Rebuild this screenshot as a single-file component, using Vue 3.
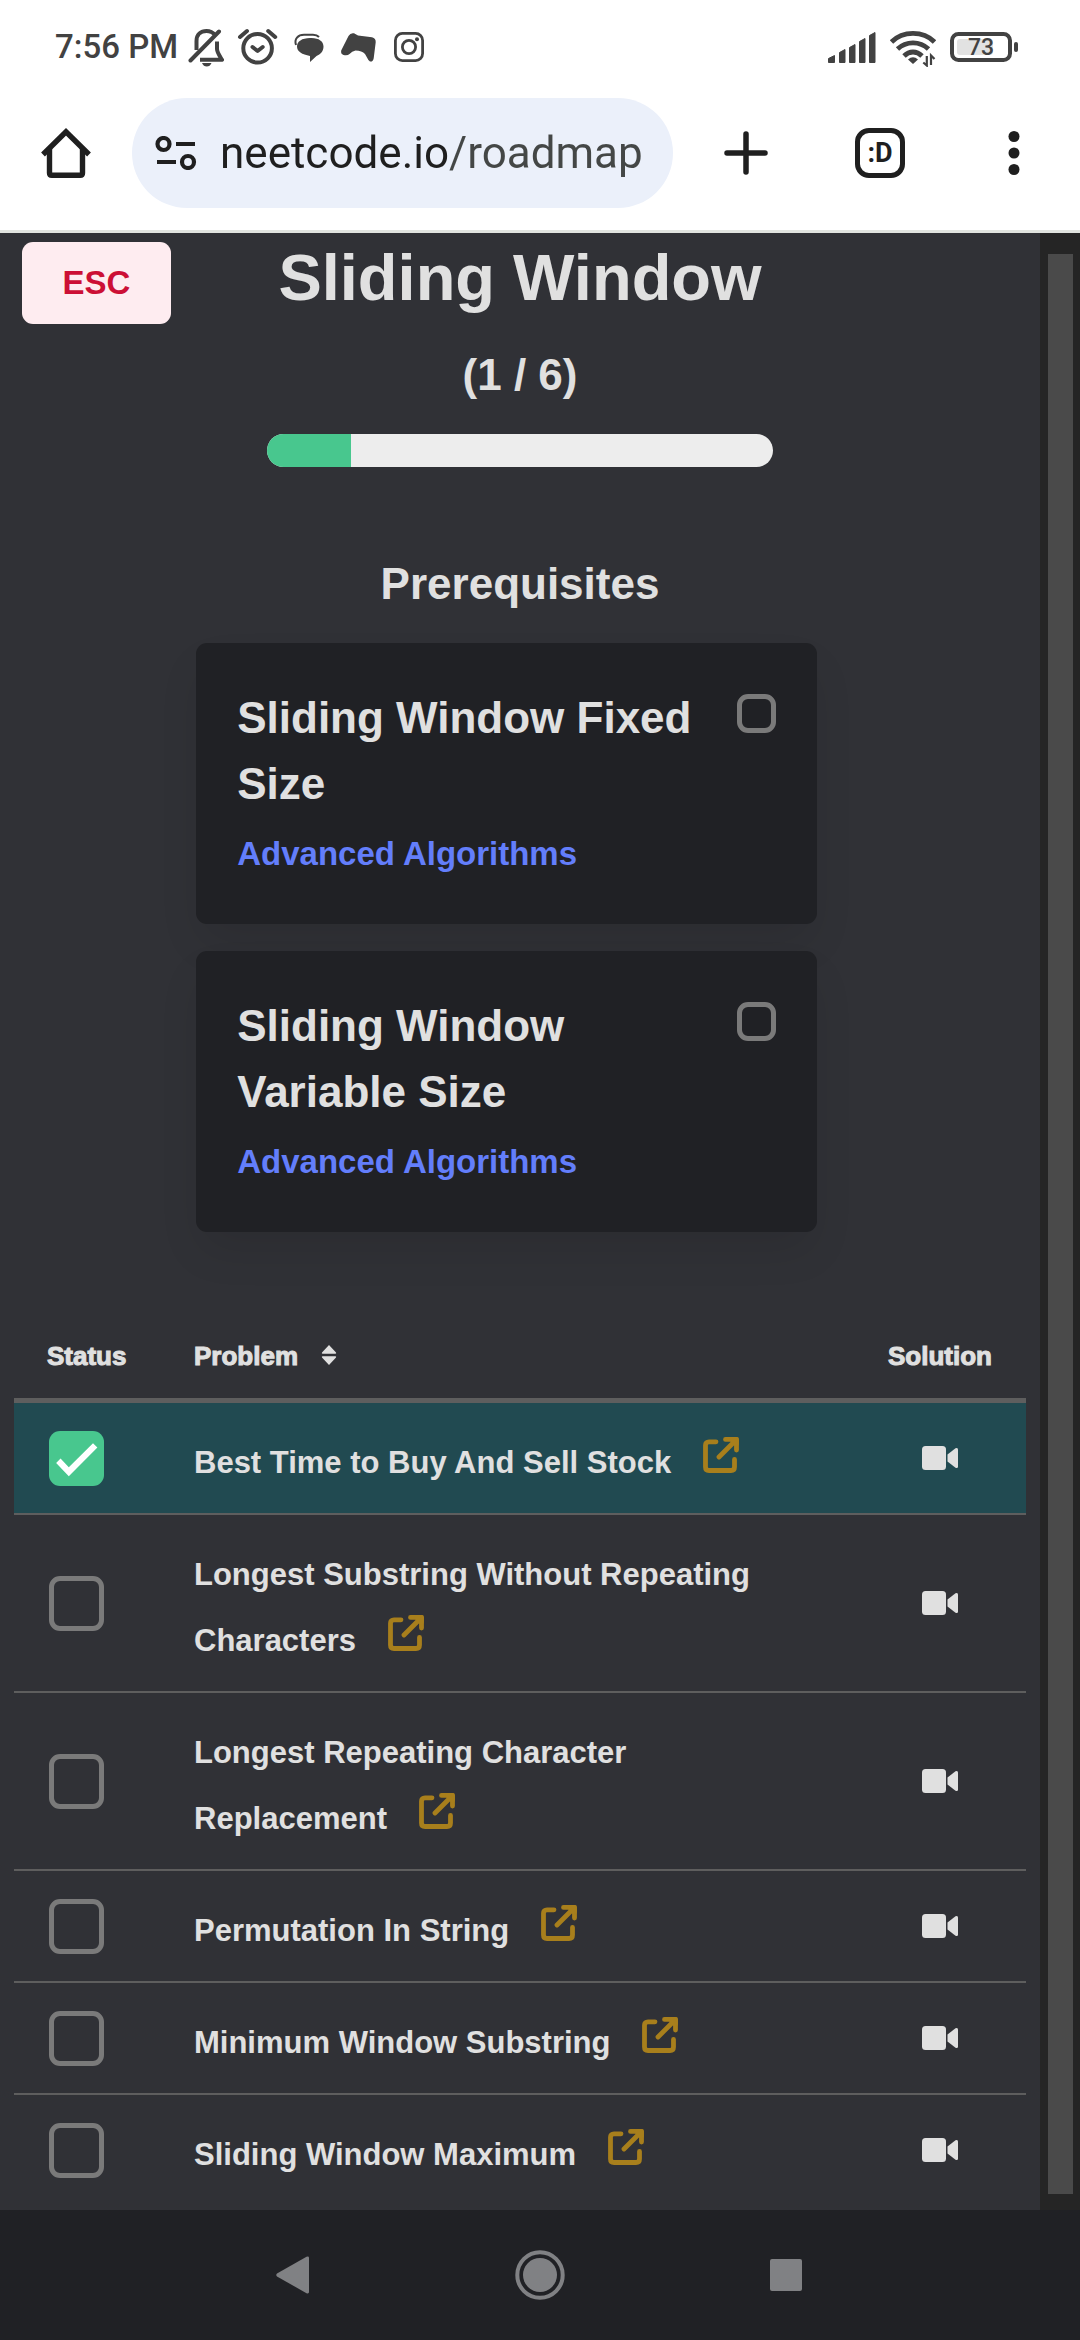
<script setup>
import { reactive, computed } from 'vue'

const prerequisites = reactive([
  { id: 'fixed', title: 'Sliding Window Fixed Size', course: 'Advanced Algorithms', done: false },
  { id: 'variable', title: 'Sliding Window Variable Size', course: 'Advanced Algorithms', done: false },
])

const problems = reactive([
  { id: 'p1', lead: 'Best Time to Buy And Sell', last: 'Stock', done: true },
  { id: 'p2', lead: 'Longest Substring Without Repeating', last: 'Characters', done: false },
  { id: 'p3', lead: 'Longest Repeating Character', last: 'Replacement', done: false },
  { id: 'p4', lead: 'Permutation In', last: 'String', done: false },
  { id: 'p5', lead: 'Minimum Window', last: 'Substring', done: false },
  { id: 'p6', lead: 'Sliding Window', last: 'Maximum', done: false },
])

const solved = computed(() => problems.filter((p) => p.done).length)
const percent = computed(() => (solved.value / problems.length) * 100)
</script>

<template>
  <div class="screen">
    <header class="browser">
      <div class="status">
        <div class="status-left">
          <span class="time">7:56 PM</span>
          <div class="notices">
            <svg width="36" height="40" viewBox="0 0 36 40" fill="none" stroke="#424242" stroke-width="4">
              <path d="M8.500 23V14C8.500 7.500 13 4 18.500 4c4 0 6.500 1.500 8.500 4M29 14.500V22c0 3 1.500 5 5 10.800H12" stroke-linejoin="round" />
              <path d="M2.500 33.500 31 4.500" stroke-linecap="round" />
              <path d="M14 36h9.500q-1.500 3.500-4.750 3.500T14 36z" fill="#424242" stroke="none" />
            </svg>
            <svg width="44" height="40" viewBox="0 0 44 40" fill="none" stroke="#424242" stroke-width="4" stroke-linecap="round">
              <circle cx="21.600" cy="21.300" r="14.300" />
              <path d="m16.500 20 5.100 4 5.100-4M4 10l7-6M32.200 4l7 6" stroke-linejoin="round" />
            </svg>
            <svg width="36" height="40" viewBox="0 0 36 40" fill="#424242">
              <path d="M18 11h1.500C27 11 31.500 14.500 31.500 19.500c0 5-3 7.500-7 9.500L18 35v-6C10 27.500 5 24.500 5 19.500 5 14.500 10 11 18 11z" />
              <path d="M4 18C2 12 6 7.800 12 7.800h9q4 0 6 2.200" fill="none" stroke="#424242" stroke-width="2" />
            </svg>
            <svg width="36" height="40" viewBox="0 0 36 40" fill="#424242">
              <path d="M8.500 9Q10.500 5.500 14 6.300L18 8.500l14 1.700q4 1 3.700 5l-2 16Q33 35 30 34.500q-1.500-.5-3-4l-2-3.500q-3-3.500-9.500-3.500Q12 24 9.500 27q-2 2-6 1Q.5 27 1.200 23.500z" />
            </svg>
            <svg width="36" height="40" viewBox="0 0 36 40" fill="none" stroke="#424242" stroke-width="2.800">
              <rect x="7.400" y="6.400" width="27.200" height="27.200" rx="7" />
              <circle cx="21" cy="20" r="6.600" />
              <circle cx="29" cy="12.300" r="2" fill="#424242" stroke="none" />
            </svg>
          </div>
        </div>
        <div class="status-right">
          <svg width="48" height="40" viewBox="0 0 48 40" fill="#424242" stroke="#424242" stroke-linejoin="round">
            <path d="M.5 31.500 6.500 28.500v7h-6zM11.500 25.500l5.500-3v13h-5.500zM21.500 20.500l5.500-3v18h-5.500zM31.500 14.500l5.500-3v24h-5.500zM41.500 8.500l5.500-3v30h-5.500z" />
          </svg>
          <svg width="46" height="40" viewBox="0 0 46 40" fill="none" stroke="#424242" stroke-width="4.800">
            <path d="M1.500 15Q10 6.400 23 6.400T44.500 15M7.500 22Q14 15.800 23 15.800T38.500 22M14 29Q18 25 23 25t9 4" />
            <path d="M18 32.500q5-4.500 10 0L23 37z" fill="#424242" stroke="none" />
            <path d="M36.800 29v9.500l-3.500-3M41 38v-9.500l3.500 3.500" stroke-width="2.200" />
          </svg>
          <svg width="68" height="40" viewBox="0 0 68 40">
            <rect x="2" y="7" width="58" height="26" rx="6.500" fill="none" stroke="#424242" stroke-width="4" />
            <rect x="7" y="12" width="36" height="16" rx="3" fill="#e2e2e2" />
            <rect x="64" y="15" width="4" height="10" rx="2" fill="#424242" />
            <text x="31" y="28" text-anchor="middle" class="battery-text">73</text>
          </svg>
        </div>
      </div>
      <div class="toolbar">
        <button class="tool" aria-label="Home">
          <svg width="50" height="50" viewBox="0 0 50 50" fill="none" stroke="#1f1f1f" stroke-width="5.400">
            <path d="M2 26.500 25 3.800l23 22.700" />
            <path d="M8.500 20v25q0 2.300 2.300 2.300h28.400q2.300 0 2.300-2.300V20" />
          </svg>
        </button>
        <div class="omnibox">
          <svg width="42" height="34" viewBox="0 0 42 34" fill="none" stroke="#1f1f1f" stroke-width="4.200">
            <circle cx="8.500" cy="8" r="6" />
            <circle cx="33" cy="26" r="6" />
            <path d="M21 8h19M2 26h19" />
          </svg>
          <input class="url" type="text" value="neetcode.io/roadmap" aria-label="Address" />
        </div>
        <div class="tools">
          <button class="tool" aria-label="New tab">
            <svg width="44" height="44" viewBox="0 0 44 44" stroke="#1f1f1f" stroke-width="5.500" stroke-linecap="round">
              <path d="M22 3v38M3 22h38" />
            </svg>
          </button>
          <button class="tool tabs" aria-label="Tabs">:D</button>
          <button class="tool" aria-label="Menu">
            <svg width="12" height="44" viewBox="0 0 12 44" fill="#1f1f1f">
              <circle cx="6" cy="5.500" r="5.500" />
              <circle cx="6" cy="22" r="5.500" />
              <circle cx="6" cy="38.500" r="5.500" />
            </svg>
          </button>
        </div>
      </div>
    </header>

    <div class="viewport">
      <main class="page">
        <div class="head">
          <button class="esc">ESC</button>
          <h1>Sliding Window</h1>
        </div>
        <p class="count">({{ solved }} / {{ problems.length }})</p>
        <div class="progress" role="progressbar" :aria-valuenow="solved" :aria-valuemax="problems.length">
          <div class="bar" :style="{ width: percent + '%' }"></div>
        </div>

        <h2>Prerequisites</h2>
        <div class="cards">
          <section v-for="c in prerequisites" :key="c.id" class="card">
            <div class="card-text">
              <label :for="c.id" class="card-title">{{ c.title }}</label>
              <p class="card-course"><a href="#">{{ c.course }}</a></p>
            </div>
            <input :id="c.id" v-model="c.done" type="checkbox" class="check small" />
          </section>
        </div>

        <table>
          <thead>
            <tr>
              <th class="col-status">Status</th>
              <th class="col-problem">
                Problem
                <svg class="sort" width="16" height="20" viewBox="0 0 16 20" fill="#e0e0e0">
                  <path d="M8 0l7 7.500q.6 1-.5 1.200h-13Q.4 8.500 1 7.500zM8 20l7-7.500q.6-1-.5-1.200h-13q-1.100.2-.5 1.200z" />
                </svg>
              </th>
              <th class="col-solution">Solution</th>
            </tr>
          </thead>
          <tbody>
            <tr v-for="p in problems" :key="p.id" :class="{ done: p.done }">
              <td class="col-status">
                <input v-model="p.done" type="checkbox" class="check" :aria-labelledby="p.id" />
              </td>
              <td class="col-problem">
                <a :id="p.id" href="#" class="name">{{ p.lead }} <span class="keep">{{ p.last }}<svg class="external" width="36" height="36" viewBox="0 0 36 36" fill="none" stroke="#a87f1c" stroke-width="4.800" stroke-linecap="round" stroke-linejoin="round">
                  <path d="M13 4.800H6Q2.500 4.800 2.500 8.200V30q0 3.500 3.500 3.500h22q3.500 0 3.500-3.500v-7.500" />
                  <path d="M22.500 2.400h11V13M33 3 16 20" />
                  <path d="M29 2.500h4.500V7z" />
                </svg></span></a>
              </td>
              <td class="col-solution">
                <button class="video" aria-label="Video solution">
                  <svg width="36" height="24" viewBox="0 0 36 24" fill="#e0e0e0">
                    <rect width="24" height="24" rx="3.500" />
                    <path d="M25.500 8.500 33.500 2.300Q36 1.200 36 3.500v17q0 2.300-2.500 1.200L25.500 15.500z" />
                  </svg>
                </button>
              </td>
            </tr>
          </tbody>
        </table>
      </main>
      <div class="scrollbar"><div class="thumb"></div></div>
    </div>

    <nav class="system">
      <button class="tool" aria-label="Back">
        <svg width="36" height="38" viewBox="0 0 36 38" fill="#808184">
          <path d="M1 17.500 30.500.8Q33 0 33 2v34q0 2-2.500 1.200L1 20.500Q-.5 19 1 17.500z" />
        </svg>
      </button>
      <button class="tool" aria-label="Home screen">
        <svg width="50" height="50" viewBox="0 0 50 50">
          <circle cx="25" cy="25" r="22.700" fill="none" stroke="#808184" stroke-width="4" />
          <circle cx="25" cy="25" r="17" fill="#808184" />
        </svg>
      </button>
      <button class="tool" aria-label="Recent apps">
        <svg width="32" height="32" viewBox="0 0 32 32"><rect width="32" height="32" rx="2" fill="#808184" /></svg>
      </button>
    </nav>
  </div>
</template>

<style>
body {
  margin: 0;
  background: #202125;
}
</style>

<style scoped>
* {
  box-sizing: border-box;
}
.screen {
  min-height: 100vh;
  display: flex;
  flex-direction: column;
  font-family: "Liberation Sans", Arial, sans-serif;
  font-weight: 700;
  color: #e0e0e0;
}
svg {
  display: block;
  flex: none;
}
button {
  border: 0;
  padding: 0;
  background: none;
  font: inherit;
  color: inherit;
}
h1,
h2,
p {
  margin: 0;
}
a {
  color: inherit;
  text-decoration: none;
}

/* Browser chrome */
.browser {
  background: #fff;
  border-bottom: 3px solid #e0e3df;
  padding-bottom: 22px;
  font-family: Roboto, sans-serif;
  font-weight: 400;
  color: #1f1f1f;
}
.status {
  height: 98px;
  padding: 0 62px 4px 55px;
  display: flex;
  align-items: center;
  justify-content: space-between;
}
.status-left,
.status-right,
.notices {
  display: flex;
  align-items: center;
}
.status-left {
  gap: 10px;
}
.notices {
  gap: 12px;
}
.status-right {
  gap: 14px;
}
.time {
  font-size: 33px;
  line-height: 40px;
  font-weight: 500;
  color: #424242;
  white-space: nowrap;
}
.battery-text {
  font-size: 23px;
  font-weight: 500;
  fill: #424242;
}
.toolbar {
  display: flex;
  align-items: center;
  padding: 0 41px;
}
.tool {
  width: 50px;
  height: 50px;
  flex: none;
  display: flex;
  align-items: center;
  justify-content: center;
}
.omnibox {
  flex: 1;
  min-width: 0;
  height: 110px;
  margin: 0 48px 0 41px;
  padding: 0 23px;
  display: flex;
  align-items: center;
  gap: 23px;
  border-radius: 55px;
  background: #ebf0fa;
}
.url {
  flex: 1;
  min-width: 0;
  border: 0;
  padding: 0;
  font-family: inherit;
  font-size: 44px;
  line-height: 60px;
  color: #1f1f1f;
  background: linear-gradient(90deg, #1f1f1f 227px, #444746 227px);
  background-clip: text;
  -webkit-background-clip: text;
  -webkit-text-fill-color: transparent;
}
.tools {
  display: flex;
  gap: 84px;
}
.tabs {
  border: 5px solid #1f1f1f;
  border-radius: 14px;
  font-size: 27px;
  line-height: 40px;
  font-weight: 700;
}

/* Page */
.viewport {
  flex: 1;
  display: flex;
}
.page {
  flex: 1;
  min-width: 0;
  padding: 9px 14px 0;
  background: #303136;
}
.head {
  display: grid;
  grid-template-columns: 1fr auto 1fr;
  padding: 0 8px;
}
.esc {
  justify-self: start;
  width: 149px;
  height: 82px;
  border-radius: 11px;
  background: #feecf0;
  color: #cc0f35;
  font-size: 33px;
}
h1 {
  font-size: 65px;
  line-height: 72px;
}
.count,
h2 {
  font-size: 44px;
  line-height: 66px;
  text-align: center;
}
.count {
  margin-top: 18px;
}
h2 {
  margin-top: 84px;
}
.progress {
  width: 50%;
  height: 33px;
  margin: 26px auto 0;
  border-radius: 17px;
  overflow: hidden;
  background: #ededed;
}
.bar {
  height: 100%;
  background: #48c78e;
}
.cards {
  display: flex;
  flex-direction: column;
  align-items: center;
  gap: 27px;
  margin: 26px 27px 82px 0;
}
.card {
  width: 63%;
  padding: 42px 41px 41px;
  display: flex;
  justify-content: space-between;
  gap: 33px;
  border-radius: 11px;
  background: #202125;
  box-shadow: 0 22px 44px -6px rgba(10, 10, 10, 0.1);
  font-size: 44px;
  line-height: 66px;
}
.card-title {
  display: block;
}
.card-course a {
  font-size: 33px;
  line-height: 40px;
  color: #637efb;
}
.check {
  appearance: none;
  display: block;
  flex: none;
  width: 55px;
  height: 55px;
  margin: 0;
  border: 5px solid #7a7a7a;
  border-radius: 11px;
}
.check.small {
  width: 39px;
  height: 39px;
  margin-top: 9px;
}
.check:checked {
  border: 0;
  background: #48c78e;
}
.check:checked::before {
  content: "";
  display: block;
  width: 100%;
  height: 100%;
  background: #fff;
  clip-path: polygon(13% 59%, 21% 51%, 36% 67%, 80% 23%, 88% 31%, 36% 83%);
}

/* Problem table */
table {
  width: 100%;
  table-layout: fixed;
  border-collapse: separate;
  border-spacing: 0;
}
th {
  padding: 22px 0;
  border-bottom: 5px solid #5e5e5e;
  font-size: 26px;
  line-height: 40px;
  text-align: left;
  -webkit-text-stroke: 1px #e0e0e0;
}
td {
  padding: 22px 0;
  border-bottom: 2px solid #5e5e5e;
  font-size: 44px;
  line-height: 66px;
  vertical-align: middle;
}
tr:last-child td {
  border-bottom: 0;
}
.done td {
  background: #214a51;
}
.col-status {
  width: 180px;
  padding-left: 33px;
}
td.col-status {
  padding: 0 0 0 35px;
}
.col-problem {
  padding-right: 46px;
}
th.col-solution,
td.col-solution {
  width: 172px;
  text-align: center;
}
.sort {
  display: inline-block;
  margin-left: 16px;
  -webkit-text-stroke: 0;
}
.name {
  font-size: 31px;
  line-height: 40px;
}
.keep {
  white-space: nowrap;
}
.external {
  display: inline-block;
  margin-left: 32px;
}
.video {
  display: block;
  margin: 0 auto;
}
.scrollbar {
  width: 40px;
  padding: 21px 7px 16px 8px;
  display: flex;
  background: #252525;
}
.thumb {
  flex: 1;
  background: #4a4a4a;
}

/* System navigation */
.system {
  height: 130px;
  display: flex;
  align-items: center;
  justify-content: center;
  gap: 196px;
  background: #202125;
}
</style>
